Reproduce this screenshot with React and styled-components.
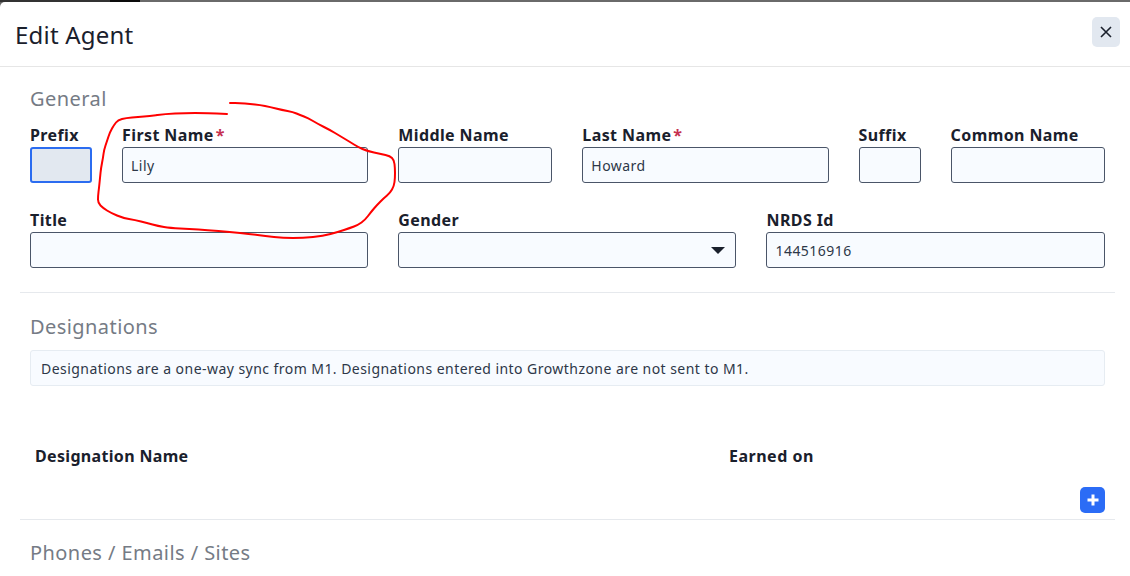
import React from 'react';
import styled, { createGlobalStyle } from 'styled-components';

const GlobalStyle = createGlobalStyle`
    html, body {
        margin: 0;
        height: 576px;
        overflow: hidden;
        background: #fff;
        font-family: "Noto Sans", "Open Sans", sans-serif;
        color: #1a202c;
    }
    * { box-sizing: border-box; }
`;

// the hand drawn circle around First Name, traced from the screenshot
const scribble = [
    [227, 114], [205, 113], [185, 113], [165, 114], [150, 116], [138, 117], [126, 118], [118, 120], [114, 125],
    [110, 132], [107, 141], [104, 150], [103, 158], [101, 168], [100, 178], [99, 188], [98, 196], [98, 203],
    [103, 208], [111, 213], [123, 218], [135, 220], [147, 223], [158, 226], [170, 228], [190, 229], [207, 230],
    [230, 232], [250, 234], [265, 236], [283, 238], [303, 238], [323, 236], [338, 232], [350, 228], [358, 225],
    [365, 220], [371, 212], [377, 205], [384, 198], [390, 193], [394, 186], [395, 178], [395, 168], [394, 160],
    [390, 156], [381, 154], [367, 151], [358, 147], [350, 142], [340, 136], [330, 130], [318, 124], [308, 118],
    [300, 115], [293, 112], [282, 110], [270, 107], [260, 105], [250, 104], [240, 103], [230, 103],
];

const smoothPath = (points) => {
    let d = `M${points[0][0]} ${points[0][1]}`;
    for (let i = 1; i < points.length - 1; i++) {
        const mx = (points[i][0] + points[i + 1][0]) / 2;
        const my = (points[i][1] + points[i + 1][1]) / 2;
        d += ` Q${points[i][0]} ${points[i][1]} ${mx} ${my}`;
    }
    const last = points[points.length - 1];
    return `${d} L${last[0]} ${last[1]}`;
};

const App = () => {
    return (
        <Page>
            <GlobalStyle />
            <BackdropStrip />
            <Modal>
                <Header>
                    <HeaderTitle>Edit Agent</HeaderTitle>
                    <CloseButton aria-label="Close">
                        <svg width="12" height="12" viewBox="0 0 12 12">
                            <path d="M1 1 L11 11 M11 1 L1 11" stroke="#1a202c" strokeWidth="1.6" fill="none" />
                        </svg>
                    </CloseButton>
                </Header>

                <Section>
                    <SectionTitle>General</SectionTitle>
                    <FormGrid>
                        <Field $span={1}>
                            <Label>Prefix</Label>
                            <Input $focused readOnly value="" />
                        </Field>
                        <Field $span={3}>
                            <Label>First Name<Req>*</Req></Label>
                            <Input readOnly value="Lily" />
                        </Field>
                        <Field $span={2}>
                            <Label>Middle Name</Label>
                            <Input readOnly value="" />
                        </Field>
                        <Field $span={3}>
                            <Label>Last Name<Req>*</Req></Label>
                            <Input readOnly value="Howard" />
                        </Field>
                        <Field $span={1}>
                            <Label>Suffix</Label>
                            <Input readOnly value="" />
                        </Field>
                        <Field $span={2}>
                            <Label>Common Name</Label>
                            <Input readOnly value="" />
                        </Field>
                        <Field $span={4}>
                            <Label>Title</Label>
                            <Input readOnly value="" />
                        </Field>
                        <Field $span={4}>
                            <Label>Gender</Label>
                            <SelectBox>
                                <Caret />
                            </SelectBox>
                        </Field>
                        <Field $span={4}>
                            <Label>NRDS Id</Label>
                            <Input readOnly value="144516916" />
                        </Field>
                    </FormGrid>
                </Section>

                <Divider />

                <DesignationSection>
                    <SectionTitle>Designations</SectionTitle>
                    <InfoBox>Designations are a one-way sync from M1. Designations entered into Growthzone are not sent to M1.</InfoBox>
                    <TableHead>
                        <NameCol>Designation Name</NameCol>
                        <EarnedCol>Earned on</EarnedCol>
                    </TableHead>
                    <AddRow>
                        <AddButton aria-label="Add">
                            <svg width="12" height="12" viewBox="0 0 12 12">
                                <path d="M6 0.5 V11.5 M0.5 6 H11.5" stroke="#fff" strokeWidth="3" fill="none" />
                            </svg>
                        </AddButton>
                    </AddRow>
                </DesignationSection>

                <Divider />

                <PhonesSection>
                    <SectionTitle>Phones / Emails / Sites</SectionTitle>
                </PhonesSection>
            </Modal>

            <Scribble width="1130" height="576" viewBox="0 0 1130 576">
                <path d={smoothPath(scribble)} fill="none" stroke="#ff0000" strokeWidth="2" strokeLinejoin="round" strokeLinecap="round" />
            </Scribble>
        </Page>
    );
};

export default App;

const Page = styled.div`
    position: relative;
    width: 1130px;
    height: 576px;
    overflow: hidden;
    background: #666;
`;

const BackdropStrip = styled.div`
    height: 2px;
    background: linear-gradient(to right, #333 0 110px, #0c0c0c 110px 140px, #6a6a6a 140px);
`;

const Modal = styled.div`
    height: 574px;
    background: #fff;
    border-top-left-radius: 5px;
`;

const Header = styled.div`
    display: flex;
    align-items: center;
    justify-content: space-between;
    height: 65px;
    padding: 0 10px 0 15px;
    border-bottom: 1px solid #e6e6e6;
`;

const HeaderTitle = styled.h2`
    margin: 0;
    padding-top: 2px;
    font-size: 24px;
    font-weight: 400;
    line-height: 66px;
    letter-spacing: 0.2px;
`;

const CloseButton = styled.button`
    display: flex;
    align-items: center;
    justify-content: center;
    width: 28px;
    height: 30px;
    margin-bottom: 5px;
    padding: 0;
    border: 0;
    border-radius: 5px;
    background: #e2e8f0;
`;

const Section = styled.section`
    padding: 18px 25.3px 24px 30px;
`;

const SectionTitle = styled.h3`
    margin: 0;
    font-size: 20px;
    font-weight: 400;
    line-height: 28px;
    letter-spacing: 0.43px;
    color: #757b85;
`;

const FormGrid = styled.div`
    display: grid;
    grid-template-columns: repeat(12, 1fr);
    column-gap: 30px;
    row-gap: 26px;
    margin-top: 11px;
`;

const Field = styled.div`
    grid-column: span ${({ $span }) => $span};
    display: flex;
    flex-direction: column;
`;

const Label = styled.label`
    font-size: 16px;
    font-weight: 700;
    line-height: 22px;
    letter-spacing: 0.4px;
    margin-bottom: 1px;
    white-space: nowrap;
`;

const Req = styled.span`
    margin-left: 2px;
    color: #c53050;
`;

const Input = styled.input`
    width: 100%;
    height: 36px;
    padding: 0 8px;
    border: ${({ $focused }) => ($focused ? '2px solid #2b6cf0' : '1px solid #4a5568')};
    border-radius: 3px;
    outline: 0;
    background: ${({ $focused }) => ($focused ? '#e2e8f0' : '#f8fbff')};
    font-family: inherit;
    font-size: 14px;
    letter-spacing: 0.45px;
    color: #2d3748;
`;

const SelectBox = styled.div`
    display: flex;
    align-items: center;
    justify-content: flex-end;
    height: 36px;
    padding-right: 10px;
    border: 1px solid #4a5568;
    border-radius: 3px;
    background: #f8fbff;
`;

const Caret = styled.span`
    width: 0;
    height: 0;
    border-left: 7px solid transparent;
    border-right: 7px solid transparent;
    border-top: 7px solid #1a202c;
`;

const Divider = styled.hr`
    height: 1px;
    margin: 0 15px 0 20px;
    border: 0;
    background: #e6e9ed;
`;

const DesignationSection = styled.section`
    padding: 20px 25px 0 30px;
    height: 226px;
`;

const InfoBox = styled.div`
    display: flex;
    align-items: center;
    height: 36px;
    margin-top: 9px;
    padding: 0 10px;
    border: 1px solid #e6ecf2;
    border-radius: 3px;
    background: #f8fbff;
    font-size: 14px;
    letter-spacing: 0.45px;
    color: #2d3748;
`;

const TableHead = styled.div`
    display: flex;
    margin-top: 58px;
    padding-left: 5px;
    font-size: 16px;
    font-weight: 700;
    line-height: 24px;
    letter-spacing: 0.33px;
`;

const NameCol = styled.div`
    width: 694px;
`;

const EarnedCol = styled.div`
    flex: 1;
    letter-spacing: 0.5px;
`;

const AddRow = styled.div`
    display: flex;
    justify-content: flex-end;
    margin-top: 19px;
`;

const AddButton = styled.button`
    display: flex;
    align-items: center;
    justify-content: center;
    width: 25px;
    height: 26px;
    padding: 0;
    border: 0;
    border-radius: 5px;
    background: #2b6cf6;
`;

const PhonesSection = styled.section`
    padding: 19px 25px 0 30px;
`;

const Scribble = styled.svg`
    position: absolute;
    top: 0;
    left: 0;
    pointer-events: none;
`;
